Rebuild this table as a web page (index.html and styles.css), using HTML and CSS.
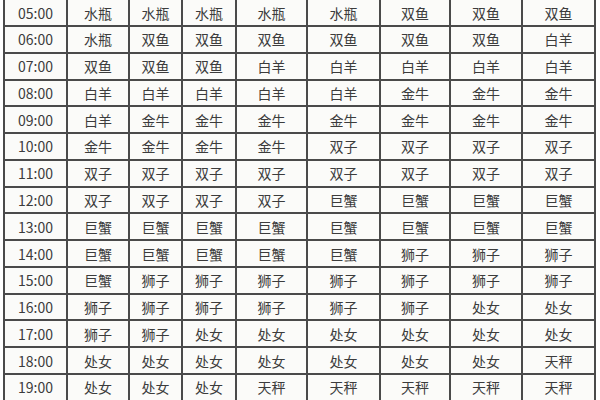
FILE: index.html
```html
<!DOCTYPE html>
<html lang="zh">
<head>
<meta charset="utf-8">
<link rel="stylesheet" href="styles.css">
</head>
<body>
<div class="grid">
<div class="c">05:00</div><div class="c">水瓶</div><div class="c">水瓶</div><div class="c">水瓶</div><div class="c">水瓶</div><div class="c">水瓶</div><div class="c">双鱼</div><div class="c">双鱼</div><div class="c">双鱼</div>
<div class="c">06:00</div><div class="c">水瓶</div><div class="c">双鱼</div><div class="c">双鱼</div><div class="c">双鱼</div><div class="c">双鱼</div><div class="c">双鱼</div><div class="c">双鱼</div><div class="c">白羊</div>
<div class="c">07:00</div><div class="c">双鱼</div><div class="c">双鱼</div><div class="c">双鱼</div><div class="c">白羊</div><div class="c">白羊</div><div class="c">白羊</div><div class="c">白羊</div><div class="c">白羊</div>
<div class="c">08:00</div><div class="c">白羊</div><div class="c">白羊</div><div class="c">白羊</div><div class="c">白羊</div><div class="c">白羊</div><div class="c">金牛</div><div class="c">金牛</div><div class="c">金牛</div>
<div class="c">09:00</div><div class="c">白羊</div><div class="c">金牛</div><div class="c">金牛</div><div class="c">金牛</div><div class="c">金牛</div><div class="c">金牛</div><div class="c">金牛</div><div class="c">金牛</div>
<div class="c">10:00</div><div class="c">金牛</div><div class="c">金牛</div><div class="c">金牛</div><div class="c">金牛</div><div class="c">双子</div><div class="c">双子</div><div class="c">双子</div><div class="c">双子</div>
<div class="c">11:00</div><div class="c">双子</div><div class="c">双子</div><div class="c">双子</div><div class="c">双子</div><div class="c">双子</div><div class="c">双子</div><div class="c">双子</div><div class="c">双子</div>
<div class="c">12:00</div><div class="c">双子</div><div class="c">双子</div><div class="c">双子</div><div class="c">双子</div><div class="c">巨蟹</div><div class="c">巨蟹</div><div class="c">巨蟹</div><div class="c">巨蟹</div>
<div class="c">13:00</div><div class="c">巨蟹</div><div class="c">巨蟹</div><div class="c">巨蟹</div><div class="c">巨蟹</div><div class="c">巨蟹</div><div class="c">巨蟹</div><div class="c">巨蟹</div><div class="c">巨蟹</div>
<div class="c">14:00</div><div class="c">巨蟹</div><div class="c">巨蟹</div><div class="c">巨蟹</div><div class="c">巨蟹</div><div class="c">巨蟹</div><div class="c">狮子</div><div class="c">狮子</div><div class="c">狮子</div>
<div class="c">15:00</div><div class="c">巨蟹</div><div class="c">狮子</div><div class="c">狮子</div><div class="c">狮子</div><div class="c">狮子</div><div class="c">狮子</div><div class="c">狮子</div><div class="c">狮子</div>
<div class="c">16:00</div><div class="c">狮子</div><div class="c">狮子</div><div class="c">狮子</div><div class="c">狮子</div><div class="c">狮子</div><div class="c">狮子</div><div class="c">处女</div><div class="c">处女</div>
<div class="c">17:00</div><div class="c">狮子</div><div class="c">狮子</div><div class="c">处女</div><div class="c">处女</div><div class="c">处女</div><div class="c">处女</div><div class="c">处女</div><div class="c">处女</div>
<div class="c">18:00</div><div class="c">处女</div><div class="c">处女</div><div class="c">处女</div><div class="c">处女</div><div class="c">处女</div><div class="c">处女</div><div class="c">处女</div><div class="c">天秤</div>
<div class="c">19:00</div><div class="c">处女</div><div class="c">处女</div><div class="c">处女</div><div class="c">天秤</div><div class="c">天秤</div><div class="c">天秤</div><div class="c">天秤</div><div class="c">天秤</div>
</div>
</body>
</html>
```
FILE: styles.css
```css
html, body {
  margin: 0;
  padding: 0;
  background: #ffffff;
  overflow: hidden;
}
body {
  width: 600px;
  height: 400px;
}
.grid {
  display: grid;
  grid-template-columns: 61px 60px 51px 52px 69px 71px 68px 70px 71px;
  grid-auto-rows: 24.77px;
  gap: 2px;
  padding: 2px;
  width: max-content;
  margin: -1.77px 0 0 3px;
  background: #4a4a4a;
  font-family: "Noto Sans CJK SC", "Noto Sans", sans-serif;
  font-size: 14px;
  color: #3c3c3c;
}
.c {
  background: #fbfbf9;
  display: flex;
  align-items: center;
  justify-content: center;
  line-height: 1;
}
```
